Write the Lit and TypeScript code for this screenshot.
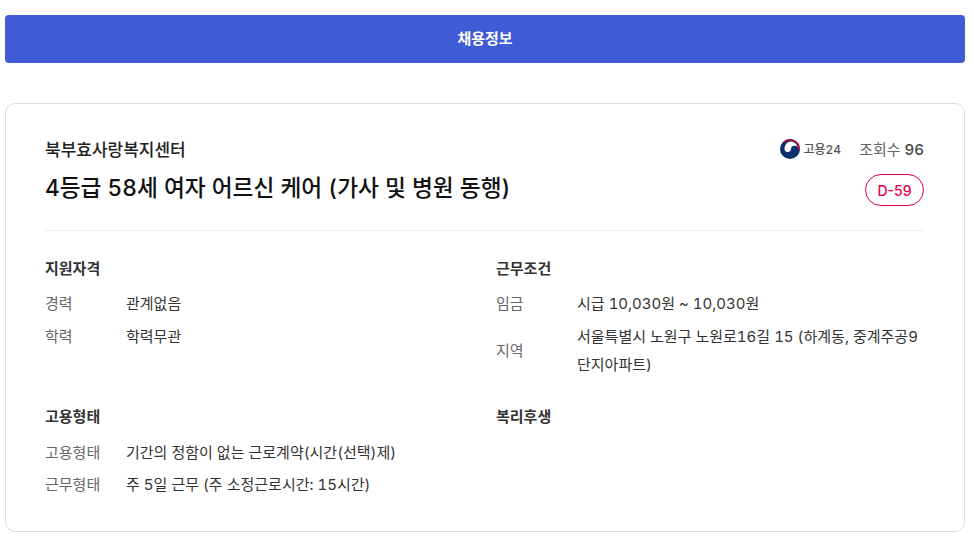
import { LitElement, html, css } from "lit";
import { customElement } from "lit/decorators.js";

@customElement("app-root")
export class AppRoot extends LitElement {
  static styles = css`
    :host { display: block; font-family: Inter, "Noto Sans CJK KR", sans-serif; font-variant-numeric: tabular-nums; color: #222; }
    .page { padding: 15px 9px 18px 5px; height: 550px; box-sizing: border-box; }
    .banner { height: 48px; background: #405bd6; border-radius: 4px; color: #fff; font-size: 15px; font-weight: 700; display: flex; align-items: center; justify-content: center; padding-bottom: 3px; box-sizing: border-box; }
    .card { margin-top: 40px; border: 1px solid #ddd; border-radius: 10px; height: 429px; box-sizing: border-box; padding: 32px 40px 0 39px; }
    .head { display: flex; justify-content: space-between; border-bottom: 1px solid #eee; height: 95px; box-sizing: border-box; }
    .company { font-size: 17px; font-weight: 500; line-height: 28px; color: #222; }
    .title { font-size: 22.7px; font-weight: 500; line-height: 32px; margin-top: 8px; color: #111; }
    .side { display: flex; flex-direction: column; align-items: flex-end; }
    .meta { display: flex; align-items: center; height: 24px; font-size: 15px; color: #666; }
    .logo { width: 20px; height: 20px; margin-right: 4px; margin-top: 2px; }
    .brand { font-size: 12px; font-weight: 500; color: #555; margin-right: 18px; }
    .views b { font-weight: 500; color: #444; font-size: 15px; margin-left: 4px; }
    .dday { margin-top: 14px; width: 59px; height: 32px; box-sizing: border-box; border: 1px solid #e0004d; border-radius: 16px; color: #e0004d; font-size: 14px; font-weight: 500; font-variant-numeric: normal; display: flex; align-items: center; justify-content: center; }
    .grid { display: grid; grid-template-columns: 451px 1fr; padding-top: 25.8px; }
    .sec { min-height: 148px; }
    .sec h3 { margin: 0 0 9.4px; font-size: 15px; font-weight: 700; line-height: 24px; color: #333; }
    .row { display: grid; grid-template-columns: 81px 1fr; align-items: center; font-size: 15px; line-height: 28px; margin-bottom: 4.4px; color: #333; }
    .row span:first-child { color: #666; }
    .sec.lower h3 { margin-bottom: 10px; }
    .sec.lower .row { margin-bottom: 4px; }
  `;
  row(k: string, v: unknown) {
    return html`<div class="row"><span>${k}</span><span>${v}</span></div>`;
  }
  render() {
    return html`<div class="page">
      <div class="banner">채용정보</div>
      <div class="card">
        <div class="head">
          <div>
            <div class="company">북부효사랑복지센터</div>
            <div class="title">4등급 58세 여자 어르신 케어 (가사 및 병원 동행)</div>
          </div>
          <div class="side">
            <div class="meta">
              <svg class="logo" viewBox="0 0 20 20">
                <circle cx="10" cy="10" r="10" fill="#0b2f6b"/>
                <path d="M4.5 9.5C4.8 5.5 7.5 2.2 11 2.4C15 2.6 18 6 17.8 10.5A3.4 3.4 0 0 0 11 9.8A3.2 3.2 0 0 1 4.5 9.5Z" fill="#fff"/>
                <path d="M3 3A10 10 0 0 1 20 10L18 11A8 8 0 0 0 5 3.2Z" fill="#e4002b"/>
              </svg>
              <span class="brand">고용24</span>
              <span class="views">조회수<b>96</b></span>
            </div>
            <div class="dday">D-59</div>
          </div>
        </div>
        <div class="grid">
          <div class="sec">
            <h3>지원자격</h3>
            ${this.row("경력", "관계없음")}
            ${this.row("학력", "학력무관")}
          </div>
          <div class="sec">
            <h3>근무조건</h3>
            ${this.row("임금", "시급 10,030원 ~ 10,030원")}
            ${this.row("지역", "서울특별시 노원구 노원로16길 15 (하계동, 중계주공9단지아파트)")}
          </div>
          <div class="sec lower">
            <h3>고용형태</h3>
            ${this.row("고용형태", "기간의 정함이 없는 근로계약(시간(선택)제)")}
            ${this.row("근무형태", "주 5일 근무 (주 소정근로시간: 15시간)")}
          </div>
          <div class="sec lower">
            <h3>복리후생</h3>
          </div>
        </div>
      </div>
    </div>`;
  }
}
